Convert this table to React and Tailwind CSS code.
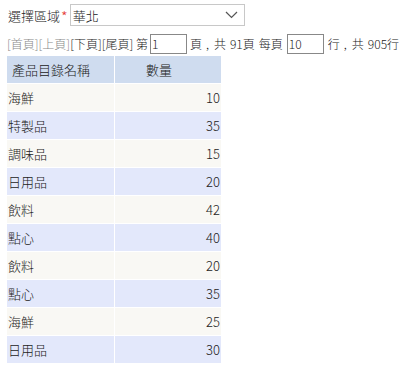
import React from "react";

const rows = [
  ["海鮮", 10],
  ["特製品", 35],
  ["調味品", 15],
  ["日用品", 20],
  ["飲料", 42],
  ["點心", 40],
  ["飲料", 20],
  ["點心", 35],
  ["海鮮", 25],
  ["日用品", 30],
];

export default function App() {
  return (
    <div
      className="w-[402px] h-[365px] bg-white text-[#222] overflow-hidden font-light"
      style={{ fontFamily: '"Noto Sans CJK TC", "Noto Sans", sans-serif' }}
    >
      <div className="flex items-center h-[27px] pt-[3px] pl-[8px]">
        <span className="text-[13px] leading-none">選擇區域</span>
        <span className="text-[15px] leading-none text-[#e53935] ml-[1px] mt-[2px]">*</span>
        <div className="ml-[2px] w-[175px] h-[22px] border border-[#c8c8c8] flex items-center justify-between pl-[2px] pr-[6px]">
          <span className="text-[13px] leading-none">華北</span>
          <svg width="13" height="8" viewBox="0 0 13 8" fill="none">
            <path d="M1 1l5.5 5.5L12 1" stroke="#555" strokeWidth="1.2" />
          </svg>
        </div>
      </div>
      <div className="flex items-center h-[20px] mt-[7px] pl-[7px] text-[12px] leading-none whitespace-pre">
        <span className="text-[#888]">[首頁][上頁]</span>
        <span className="text-[#222]">[下頁][尾頁] 第</span>
        <div className="ml-[2px] w-[37px] h-[20px] border border-[#888] flex items-center pl-[1px] text-[12px]">1</div>
        <span className="ml-[3px]">頁</span>
        <span className="ml-[4px]">,</span>
        <span className="ml-[5px]">共</span>
        <span className="ml-[4px]">91頁</span>
        <span className="ml-[4px]">每頁</span>
        <div className="ml-[4px] w-[37px] h-[20px] border border-[#888] flex items-center pl-[1px] text-[12px]">10</div>
        <span className="ml-[4px]">行</span>
        <span className="ml-[4px]">,</span>
        <span className="ml-[5px]">共</span>
        <span className="ml-[4px]">905行</span>
      </div>
      <table className="ml-[6px] mt-[1px] border-separate border-spacing-[1px] text-[13px] leading-none">
        <thead>
          <tr className="bg-[#cfdcef]">
            <th className="w-[107px] h-[27px] text-left font-light pl-[5px]">產品目錄名稱</th>
            <th className="w-[106px] h-[27px] text-left font-light pl-[31px]">數量</th>
          </tr>
        </thead>
        <tbody>
          {rows.map(([name, n], i) => (
            <tr key={i} className={i % 2 === 0 ? "bg-[#f9f8f4]" : "bg-[#e3e8fb]"}>
              <td className="h-[27px] pl-[1px]">{name}</td>
              <td className="h-[27px] text-right pr-[1px]">{n}</td>
            </tr>
          ))}
        </tbody>
      </table>
    </div>
  );
}
